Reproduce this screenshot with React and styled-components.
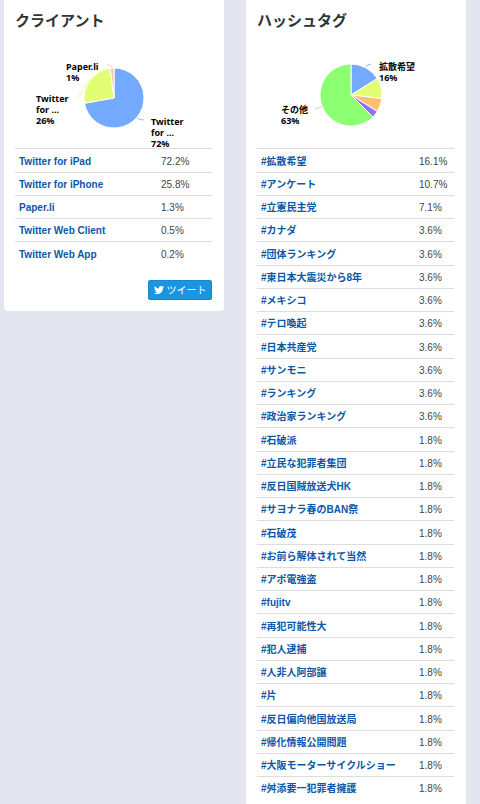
import React from "react";
import styled, { createGlobalStyle } from "styled-components";

const GlobalStyle = createGlobalStyle`
  * { box-sizing: border-box; }
  body {
    margin: 0;
    background: #e3e6ee;
    color: #444;
    font-family: "Liberation Sans", "Noto Sans CJK JP", sans-serif;
    font-size: 10px;
  }
`;

const Page = styled.main`
  display: grid;
  grid-template-columns: 1fr 1fr;
  align-items: start;
  gap: 22px;
  padding: 0 14px 0 4px;
  height: 100vh;
  overflow: hidden;
`;

const Card = styled.section`
  min-width: 0;
  padding: 8px 12px 11px 11px;
  background: #fff;
  border-radius: 0 0 4px 4px;
`;

const Title = styled.h2`
  margin: 0;
  font-family: "Noto Sans CJK JP", sans-serif;
  font-size: 15px;
  line-height: 24px;
  font-weight: 700;
  color: #333;
`;

const Chart = styled.svg`
  display: block;
  width: 100%;
  height: 100px;
  margin-top: 16px;
  overflow: visible;
`;

const ChartLabel = styled.text`
  font-family: "Noto Sans", "Noto Sans CJK JP", sans-serif;
  font-size: 9px;
  font-weight: 700;
  fill: #000;
`;

const Table = styled.table`
  width: 100%;
  border-collapse: separate;
  border-spacing: 0;
  table-layout: fixed;
`;

const Row = styled.tr`
  height: 23px;
  &:nth-child(4n + 1) { height: 24px; }
`;

const Name = styled.th`
  padding: 2px 0 0 4px;
  border-top: 1px solid #ddd;
  line-height: 18px;
  text-align: left;
  white-space: nowrap;
`;

const Share = styled.td`
  width: ${(p) => p.$width}px;
  padding: 2px 0 0;
  border-top: 1px solid #ddd;
  line-height: 18px;
`;

const NameLink = styled.a`
  color: #0b57a8;
  text-decoration: none;
`;

const Actions = styled.div`
  display: flex;
  justify-content: flex-end;
  margin-top: 15px;
`;

const TweetButton = styled.button`
  display: flex;
  align-items: center;
  justify-content: center;
  gap: 3px;
  width: 64px;
  height: 20px;
  padding: 0;
  border: 1px solid #1a87d0;
  border-radius: 2px;
  background: #1b95e0;
  color: #fff;
  font-family: "Noto Sans CJK JP", sans-serif;
  font-size: 10px;
  line-height: 18px;
`;

const clients = [
  ["Twitter for iPad", "72.2%"],
  ["Twitter for iPhone", "25.8%"],
  ["Paper.li", "1.3%"],
  ["Twitter Web Client", "0.5%"],
  ["Twitter Web App", "0.2%"],
];

const hashtags = [
  ["#拡散希望", "16.1%"],
  ["#アンケート", "10.7%"],
  ["#立憲民主党", "7.1%"],
  ["#カナダ", "3.6%"],
  ["#団体ランキング", "3.6%"],
  ["#東日本大震災から8年", "3.6%"],
  ["#メキシコ", "3.6%"],
  ["#テロ喚起", "3.6%"],
  ["#日本共産党", "3.6%"],
  ["#サンモニ", "3.6%"],
  ["#ランキング", "3.6%"],
  ["#政治家ランキング", "3.6%"],
  ["#石破派", "1.8%"],
  ["#立民な犯罪者集団", "1.8%"],
  ["#反日国賊放送犬HK", "1.8%"],
  ["#サヨナラ春のBAN祭", "1.8%"],
  ["#石破茂", "1.8%"],
  ["#お前ら解体されて当然", "1.8%"],
  ["#アポ電強盗", "1.8%"],
  ["#fujitv", "1.8%"],
  ["#再犯可能性大", "1.8%"],
  ["#犯人逮捕", "1.8%"],
  ["#人非人阿部譲", "1.8%"],
  ["#片", "1.8%"],
  ["#反日偏向他国放送局", "1.8%"],
  ["#帰化情報公開問題", "1.8%"],
  ["#大阪モーターサイクルショー", "1.8%"],
  ["#舛添要一犯罪者擁護", "1.8%"],
];

const clientPie = {
  cx: 99,
  cy: 50,
  r: 30,
  slices: [[72.2, "#73a9ff"], [25.8, "#e2ff73"], [2, "#ffc69a"]],
  leaders: [
    ["M122 70 Q124 72 129 72", "#9fc0f5"],
    ["M75 32 C69 35 69 45 62 49", "#e6f5a4"],
    ["M97 21 Q97 17 92 17", "#ffc9a8"],
  ],
  labels: [
    [51, 22, ["Paper.li", "1%"]],
    [21, 54, ["Twitter", "for ...", "26%"]],
    [136, 77, ["Twitter", "for ...", "72%"]],
  ],
};

const hashtagPie = {
  cx: 94,
  cy: 47,
  r: 31,
  slices: [[16.1, "#73a9ff"], [10.7, "#e2ff73"], [7.1, "#ffc073"], [3.6, "#8873f0"], [62.5, "#8cff73"]],
  leaders: [
    ["M108 20 Q110 16 114 16", "#8fb4ee"],
    ["M65 59 Q62 59 58 61", "#a8f09a"],
  ],
  labels: [
    [122, 22, ["拡散希望", "16%"]],
    [24, 65, ["その他", "63%"]],
  ],
};

function slicePath({ cx, cy, r }, start, end) {
  const at = (share) => {
    const a = (share / 100) * Math.PI * 2;
    return `${cx + r * Math.sin(a)} ${cy - r * Math.cos(a)}`;
  };
  return `M${cx} ${cy}L${at(start)}A${r} ${r} 0 ${end - start > 50 ? 1 : 0} 1 ${at(end)}Z`;
}

function PieChart({ pie, label }) {
  let start = 0;
  return (
    <Chart viewBox="0 0 197 100" role="img" aria-label={label}>
      {pie.leaders.map(([d, color]) => (
        <path key={d} d={d} fill="none" stroke={color} />
      ))}
      {pie.slices.map(([share, color]) => {
        const d = slicePath(pie, start, start + share);
        start += share;
        return <path key={color} d={d} fill={color} stroke="#fff" />;
      })}
      {pie.labels.map(([x, y, lines]) => (
        <ChartLabel key={y} x={x} y={y}>
          {lines.map((line, i) => (
            <tspan key={line} x={x} dy={i ? 11 : 0}>{line}</tspan>
          ))}
        </ChartLabel>
      ))}
    </Chart>
  );
}

function ShareTable({ rows, shareWidth }) {
  return (
    <Table>
      <tbody>
        {rows.map(([name, share]) => (
          <Row key={name}>
            <Name scope="row"><NameLink href="#">{name}</NameLink></Name>
            <Share $width={shareWidth}>{share}</Share>
          </Row>
        ))}
      </tbody>
    </Table>
  );
}

function BirdIcon() {
  return (
    <svg width="10" height="10" viewBox="0 0 24 24" fill="#fff" aria-hidden="true">
      <path d="M23.953 4.57a10 10 0 01-2.825.775 4.958 4.958 0 002.163-2.723c-.951.555-2.005.959-3.127 1.184a4.92 4.92 0 00-8.384 4.482C7.69 8.095 4.067 6.13 1.64 3.162a4.822 4.822 0 00-.666 2.475c0 1.71.87 3.213 2.188 4.096a4.904 4.904 0 01-2.228-.616v.06a4.923 4.923 0 003.946 4.827 4.996 4.996 0 01-2.212.085 4.936 4.936 0 004.604 3.417 9.867 9.867 0 01-6.102 2.105c-.39 0-.779-.023-1.17-.067a13.995 13.995 0 007.557 2.209c9.053 0 13.998-7.496 13.998-13.985 0-.21 0-.42-.015-.63A9.935 9.935 0 0024 4.59z" />
    </svg>
  );
}

export default function App() {
  return (
    <>
      <GlobalStyle />
      <Page lang="ja">
        <Card>
          <Title>クライアント</Title>
          <PieChart pie={clientPie} label="クライアント" />
          <ShareTable rows={clients} shareWidth={51} />
          <Actions>
            <TweetButton type="button"><BirdIcon />ツイート</TweetButton>
          </Actions>
        </Card>
        <Card>
          <Title>ハッシュタグ</Title>
          <PieChart pie={hashtagPie} label="ハッシュタグ" />
          <ShareTable rows={hashtags} shareWidth={35} />
        </Card>
      </Page>
    </>
  );
}
